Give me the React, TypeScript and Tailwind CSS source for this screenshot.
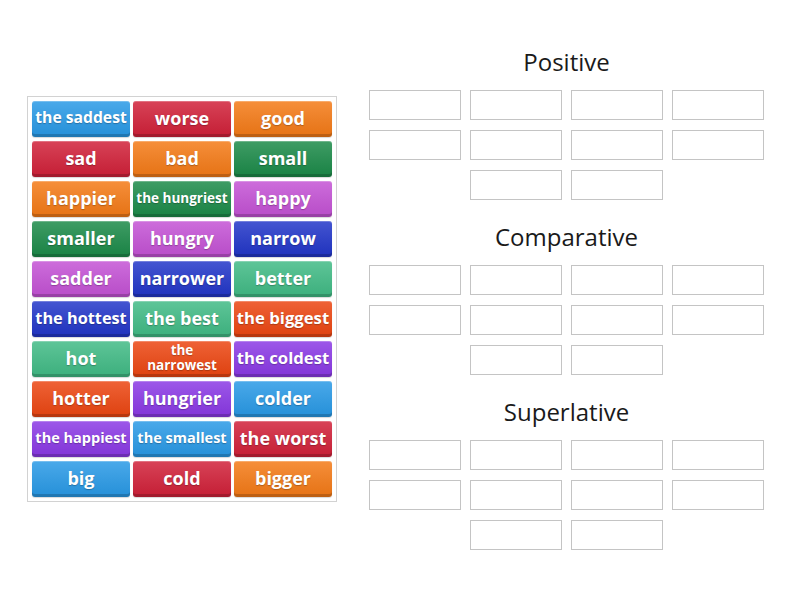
import React from 'react';

type Tile = { label: string; bg: string; size?: string };

const BLUE = 'bg-[#2a9ae6]';
const RED = 'bg-[#d1223a]';
const ORANGE = 'bg-[#f47b18]';
const GREEN = 'bg-[#1d8b4a]';
const PINK = 'bg-[#c453d5]';
const NAVY = 'bg-[#2337c9]';
const TEAL = 'bg-[#42bb86]';
const FIRE = 'bg-[#ec4713]';
const VIOLET = 'bg-[#8b3ae5]';

const tiles: Tile[] = [
  { label: 'the saddest', bg: BLUE, size: 'text-[15.7px]' },
  { label: 'worse', bg: RED },
  { label: 'good', bg: ORANGE },
  { label: 'sad', bg: RED },
  { label: 'bad', bg: ORANGE },
  { label: 'small', bg: GREEN },
  { label: 'happier', bg: ORANGE },
  { label: 'the hungriest', bg: GREEN, size: 'text-[13.5px]' },
  { label: 'happy', bg: PINK },
  { label: 'smaller', bg: GREEN },
  { label: 'hungry', bg: PINK },
  { label: 'narrow', bg: NAVY },
  { label: 'sadder', bg: PINK },
  { label: 'narrower', bg: NAVY },
  { label: 'better', bg: TEAL },
  { label: 'the hottest', bg: NAVY, size: 'text-[16.3px]' },
  { label: 'the best', bg: TEAL },
  { label: 'the biggest', bg: FIRE, size: 'text-[16.7px]' },
  { label: 'hot', bg: TEAL },
  { label: 'the\nnarrowest', bg: FIRE, size: 'text-[13.5px] leading-[15px]' },
  { label: 'the coldest', bg: VIOLET, size: 'text-[16.7px]' },
  { label: 'hotter', bg: FIRE },
  { label: 'hungrier', bg: VIOLET },
  { label: 'colder', bg: BLUE },
  { label: 'the happiest', bg: VIOLET, size: 'text-[14.5px]' },
  { label: 'the smallest', bg: BLUE, size: 'text-[14.5px]' },
  { label: 'the worst', bg: RED },
  { label: 'big', bg: BLUE },
  { label: 'cold', bg: RED },
  { label: 'bigger', bg: ORANGE },
];

const groups = ['Positive', 'Comparative', 'Superlative'];

function DropBox() {
  return <div className="h-[30px] w-[92px] border border-[#c4c4c4] bg-white" />;
}

function Group({ title }: { title: string }) {
  return (
    <section className="flex flex-col items-center">
      <h2 className="h-[32px] text-[24px] leading-[32px] text-[#1a1a1a]">{title}</h2>
      <div className="mt-[12px] flex flex-col items-center gap-y-[10px]">
        <div className="flex gap-x-[9px]">
          <DropBox />
          <DropBox />
          <DropBox />
          <DropBox />
        </div>
        <div className="flex gap-x-[9px]">
          <DropBox />
          <DropBox />
          <DropBox />
          <DropBox />
        </div>
        <div className="flex gap-x-[9px]">
          <DropBox />
          <DropBox />
        </div>
      </div>
    </section>
  );
}

export default function App() {
  return (
    <div
      className="flex h-[600px] w-[800px] bg-white"
      style={{ fontFamily: '"Open Sans", "Noto Sans", sans-serif' }}
    >
      <div className="pl-[27px] pt-[96px]">
        <div className="grid w-[310px] grid-cols-[98px_98px_98px] gap-x-[3px] gap-y-[4px] border border-[#d2d2d2] p-[4px]">
          {tiles.map((t) => (
            <div
              key={t.label}
              className={`${t.bg} flex h-[36px] items-center justify-center whitespace-pre-line rounded-[3px] bg-gradient-to-b from-white/15 to-black/5 px-[1px] pb-[2px] text-center font-bold text-white shadow-[inset_0_-3px_0_rgba(0,0,0,0.18),inset_0_1px_0_rgba(255,255,255,0.25),0_1px_1px_rgba(0,0,0,0.15)] [text-shadow:0_1px_1px_rgba(0,0,0,0.25)] ${t.size ?? 'text-[18px] leading-[22px]'}`}
            >
              {t.label}
            </div>
          ))}
        </div>
      </div>
      <div className="ml-[32px] flex flex-col gap-y-[21px] pt-[46px]">
        {groups.map((g) => (
          <Group key={g} title={g} />
        ))}
      </div>
    </div>
  );
}
